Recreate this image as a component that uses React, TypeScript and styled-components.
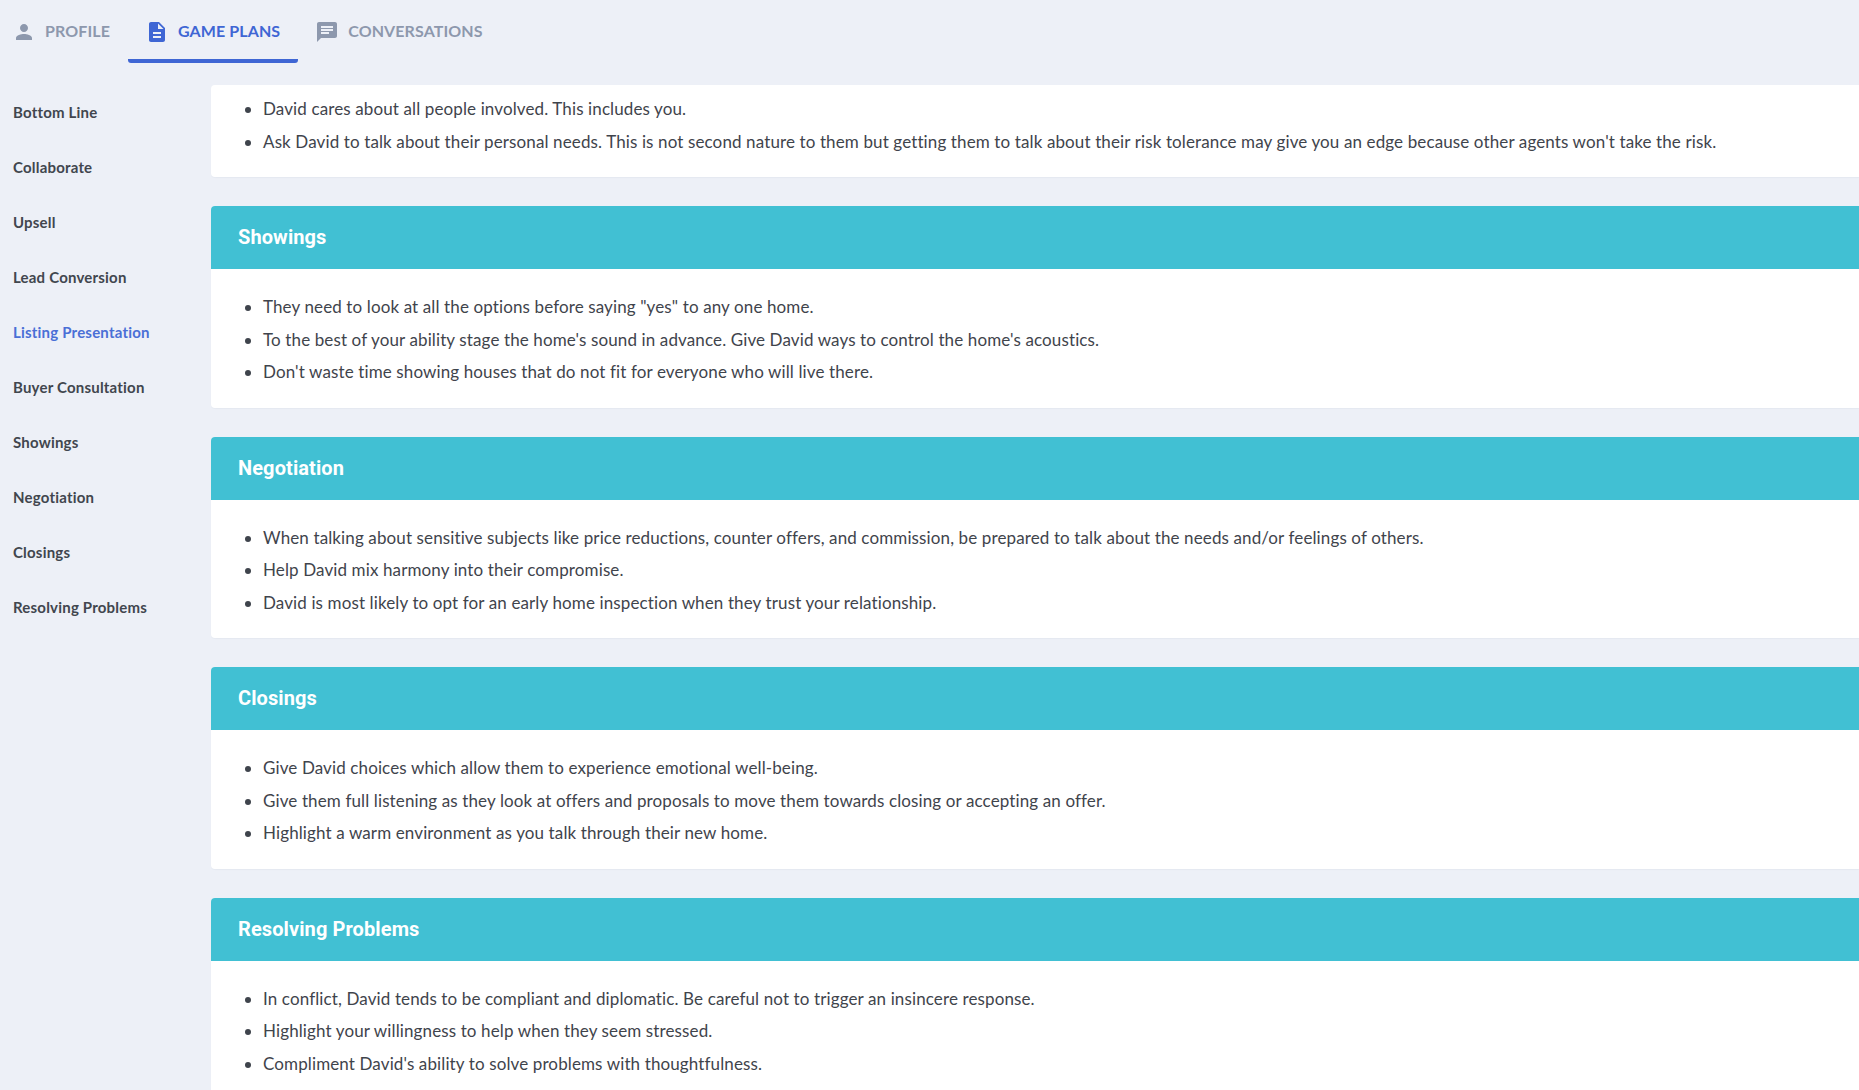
import styled, { createGlobalStyle } from 'styled-components';

const GlobalStyle = createGlobalStyle`
    html, body {
        margin: 0;
        padding: 0;
        height: 100%;
        overflow: hidden;
        background: #edf0f7;
        font-family: 'Lato', 'Open Sans', sans-serif;
    }
`;

const Page = styled.div`
    height: 1090px;
    overflow: hidden;
    background: #edf0f7;
`;

const TabBar = styled.div`
    height: 85px;
    display: flex;
    align-items: flex-start;
`;

const Tab = styled.div<{ active?: boolean; pad: string }>`
    height: 63px;
    box-sizing: border-box;
    padding: 2px 18px 0 ${(props) => props.pad};
    display: flex;
    align-items: center;
    gap: 9px;
    font-size: 16px;
    font-weight: 700;
    letter-spacing: 0.1px;
    color: ${(props) => (props.active ? '#3f66d4' : '#8d98ad')};
    border-bottom: 4px solid ${(props) => (props.active ? '#3f66d4' : 'transparent')};
    border-radius: 0 0 3px 3px;
    svg {
        width: 24px;
        height: 24px;
        margin-top: 3px;
        fill: currentColor;
    }
`;

const Main = styled.div`
    display: flex;
`;

const Sidebar = styled.nav`
    width: 211px;
    flex-shrink: 0;
    padding: 16.5px 0 0 13px;
    box-sizing: border-box;
    display: flex;
    flex-direction: column;
    gap: 35px;
`;

const NavItem = styled.div<{ active?: boolean }>`
    height: 20px;
    line-height: 20px;
    font-size: 15px;
    font-weight: 700;
    letter-spacing: 0.2px;
    color: ${(props) => (props.active ? '#4a6fd6' : '#41464e')};
`;

const Content = styled.div`
    flex: 1;
    display: flex;
    flex-direction: column;
    gap: 29px;
`;

const Card = styled.section`
    background: #fff;
    border-radius: 4px 0 0 4px;
    box-shadow: 0 1px 1px rgba(60, 70, 100, 0.04);
`;

const CardHeader = styled.h2`
    margin: 0;
    height: 63px;
    box-sizing: border-box;
    padding: 0 0 1px 27px;
    display: flex;
    align-items: center;
    background: #41c0d3;
    color: #fff;
    border-radius: 4px 0 0 0;
    font-family: 'Roboto', sans-serif;
    font-size: 20px;
    font-weight: 700;
    letter-spacing: 0.1px;
`;

const List = styled.ul<{ top: string; bottom: string }>`
    margin: 0;
    padding: ${(props) => props.top} 0 ${(props) => props.bottom} 52px;
    font-size: 17px;
    letter-spacing: 0.12px;
    line-height: 32.5px;
    color: #3f444c;
`;

const sections = [
    {
        title: '',
        items: [
            'David cares about all people involved. This includes you.',
            "Ask David to talk about their personal needs. This is not second nature to them but getting them to talk about their risk tolerance may give you an edge because other agents won't take the risk.",
        ],
    },
    {
        title: 'Showings',
        items: [
            'They need to look at all the options before saying "yes" to any one home.',
            "To the best of your ability stage the home's sound in advance. Give David ways to control the home's acoustics.",
            "Don't waste time showing houses that do not fit for everyone who will live there.",
        ],
    },
    {
        title: 'Negotiation',
        items: [
            'When talking about sensitive subjects like price reductions, counter offers, and commission, be prepared to talk about the needs and/or feelings of others.',
            'Help David mix harmony into their compromise.',
            'David is most likely to opt for an early home inspection when they trust your relationship.',
        ],
    },
    {
        title: 'Closings',
        items: [
            'Give David choices which allow them to experience emotional well-being.',
            'Give them full listening as they look at offers and proposals to move them towards closing or accepting an offer.',
            'Highlight a warm environment as you talk through their new home.',
        ],
    },
    {
        title: 'Resolving Problems',
        items: [
            'In conflict, David tends to be compliant and diplomatic. Be careful not to trigger an insincere response.',
            'Highlight your willingness to help when they seem stressed.',
            "Compliment David's ability to solve problems with thoughtfulness.",
        ],
    },
];

const navItems = [
    'Bottom Line',
    'Collaborate',
    'Upsell',
    'Lead Conversion',
    'Listing Presentation',
    'Buyer Consultation',
    'Showings',
    'Negotiation',
    'Closings',
    'Resolving Problems',
];

export default function App() {
    return (
        <Page>
            <GlobalStyle />
            <TabBar>
                <Tab pad="12px">
                    <svg viewBox="0 0 24 24">
                        <path d="M12 12c2.21 0 4-1.79 4-4s-1.79-4-4-4-4 1.79-4 4 1.79 4 4 4zm0 2c-2.67 0-8 1.34-8 4v2h16v-2c0-2.66-5.33-4-8-4z" />
                    </svg>
                    PROFILE
                </Tab>
                <Tab active pad="17px">
                    <svg viewBox="0 0 24 24">
                        <path d="M14 2H6c-1.1 0-1.99.9-1.99 2L4 20c0 1.1.89 2 1.99 2H18c1.1 0 2-.9 2-2V8l-6-6zm2 16H8v-2h8v2zm0-4H8v-2h8v2zm-3-5V3.5L18.5 9H13z" />
                    </svg>
                    GAME PLANS
                </Tab>
                <Tab pad="17px">
                    <svg viewBox="0 0 24 24">
                        <path d="M20 2H4c-1.1 0-1.99.9-1.99 2L2 22l4-4h14c1.1 0 2-.9 2-2V4c0-1.1-.9-2-2-2zM6 9h12v2H6V9zm8 5H6v-2h8v2zm4-6H6V6h12v2z" />
                    </svg>
                    CONVERSATIONS
                </Tab>
            </TabBar>
            <Main>
                <Sidebar>
                    {navItems.map((item) => (
                        <NavItem key={item} active={item === 'Listing Presentation'}>
                            {item}
                        </NavItem>
                    ))}
                </Sidebar>
                <Content>
                    {sections.map((section) => (
                        <Card key={section.items[0]}>
                            {section.title && <CardHeader>{section.title}</CardHeader>}
                            <List
                                top={section.title ? '22px' : '8px'}
                                bottom={section.title ? '19px' : '19px'}
                            >
                                {section.items.map((item) => (
                                    <li key={item}>{item}</li>
                                ))}
                            </List>
                        </Card>
                    ))}
                </Content>
            </Main>
        </Page>
    );
}
